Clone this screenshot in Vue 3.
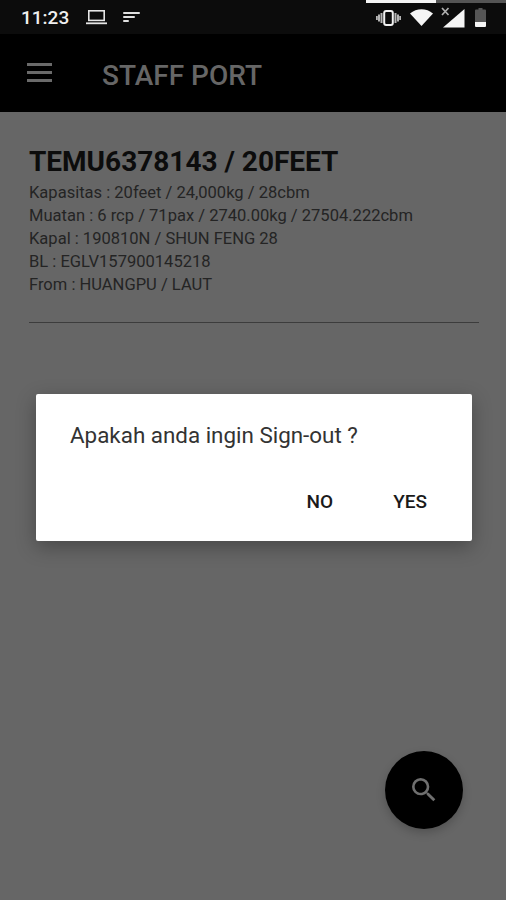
<template>
  <div class="screen">
    <div class="status-bar">
      <div class="status-strip"></div>
      <span class="clock">11:23</span>
      <svg class="ic-laptop" width="22" height="16" viewBox="0 0 22 16">
        <rect x="2.8" y="1.8" width="15.4" height="9.6" fill="none" stroke="#e6e6e6" stroke-width="1.6" />
        <rect x="0" y="13.4" width="21" height="1.8" fill="#e6e6e6" />
      </svg>
      <svg class="ic-notes" width="18" height="12" viewBox="0 0 18 12">
        <rect x="0" y="1" width="17" height="2" rx="1" fill="#e0e0e0" />
        <rect x="0" y="5" width="12" height="2" rx="1" fill="#e0e0e0" />
        <rect x="0" y="9" width="6" height="2" rx="1" fill="#e0e0e0" />
      </svg>
      <div class="status-right">
        <svg width="25" height="16" viewBox="0 0 25 16">
          <rect x="8.2" y="1" width="8.6" height="14" rx="2" fill="none" stroke="#f0f0f0" stroke-width="2" />
          <path d="M5.500 3v10M3 4.500v7M0.800 6v4M19.500 3v10M22 4.500v7M24.200 6v4" stroke="#b5b5b5" stroke-width="2" />
        </svg>
        <svg class="ic-wifi" width="23" height="17" viewBox="0 0 23 17">
          <path d="M0 4.500C6.500 -1.200 16.500 -1.200 23 4.500L11.500 17Z" fill="#f5f5f5" />
        </svg>
        <svg class="ic-signal" width="24" height="21" viewBox="0 0 24 21">
          <path d="M23.500 2V20.500H2Z" fill="#f5f5f5" />
          <path d="M1 1l6.500 7M7.500 1l-6.500 7" stroke="#b0b0b0" stroke-width="1.700" />
        </svg>
        <svg class="ic-battery" width="11" height="19" viewBox="0 0 11 19">
          <path d="M3.500 0h4v1.500h2.500a1 1 0 0 1 1 1V14H0V2.500a1 1 0 0 1 1-1h2.500Z" fill="#565656" />
          <path d="M0 14h11v4a1 1 0 0 1-1 1H1a1 1 0 0 1-1-1Z" fill="#f5f5f5" />
        </svg>
      </div>
    </div>

    <header class="app-bar">
      <svg class="menu" width="28" height="20" viewBox="0 0 28 20">
        <rect x="1" y="1" width="25" height="3" fill="#6a6a6a" />
        <rect x="1" y="9" width="25" height="3" fill="#6a6a6a" />
        <rect x="1" y="17" width="25" height="3" fill="#6a6a6a" />
      </svg>
      <span class="title">STAFF PORT</span>
    </header>

    <main class="content">
      <h1>{{ heading }}</h1>
      <p v-for="line in lines" :key="line">{{ line }}</p>
      <hr />
    </main>

    <div class="dialog">
      <div class="message">Apakah anda ingin Sign-out ?</div>
      <div class="actions">
        <span>NO</span>
        <span>YES</span>
      </div>
    </div>

    <div class="fab">
      <svg width="32" height="32" viewBox="0 0 24 24">
        <path fill="#6f6f6f" d="M15.500 14h-.79l-.28-.27A6.471 6.471 0 0 0 16 9.500 6.500 6.500 0 1 0 9.500 16c1.610 0 3.090-.59 4.230-1.570l.27.28v.79l5 4.990L20.490 19l-4.990-5zm-6 0C7.010 14 5 11.990 5 9.500S7.010 5 9.500 5 14 7.010 14 9.500 11.990 14 9.500 14z" />
      </svg>
    </div>
  </div>
</template>

<script setup>
const heading = 'TEMU6378143 / 20FEET'
const lines = [
  'Kapasitas : 20feet / 24,000kg / 28cbm',
  'Muatan : 6 rcp / 71pax / 2740.00kg / 27504.222cbm',
  'Kapal : 190810N / SHUN FENG 28',
  'BL : EGLV157900145218',
  'From : HUANGPU / LAUT'
]
</script>

<style>
html,
body {
  margin: 0;
  background: #666;
}
</style>

<style scoped>
.screen {
  position: relative;
  width: 506px;
  height: 900px;
  overflow: hidden;
  background: #666666;
  font-family: Roboto, "Liberation Sans", sans-serif;
}

.status-bar {
  position: relative;
  display: flex;
  align-items: center;
  height: 34px;
  padding: 0 20px 0 21px;
  box-sizing: border-box;
  background: #0c0c0c;
}

.status-strip {
  position: absolute;
  top: 0;
  left: 366px;
  width: 140px;
  height: 3px;
  background: linear-gradient(to right, #f5f5f5 0 50%, #555 50% 100%);
}

.clock {
  color: #f0f0f0;
  font-size: 19px;
  font-weight: 500;
  margin-right: 17px;
}

.ic-notes {
  margin-left: 15px;
}

.status-right {
  display: flex;
  align-items: center;
  margin-left: auto;
  gap: 8px;
  padding-top: 1px;
}

.ic-wifi {
  margin-left: 1px;
}

.ic-signal {
  margin-left: 0;
  margin-top: -1px;
}

.ic-battery {
  margin-left: 2px;
}

.app-bar {
  display: flex;
  align-items: center;
  height: 78px;
  padding-left: 26px;
  box-sizing: border-box;
  background: #000;
}

.menu {
  margin-right: 48px;
  margin-top: -2px;
}

.title {
  color: #666;
  font-size: 28px;
  font-weight: 500;
  padding-top: 4px;
}

.content {
  padding: 34px 27px 0 29px;
}

h1 {
  margin: 0 0 3px;
  color: #0c0c0c;
  font-size: 28px;
  line-height: 32px;
  font-weight: 700;
}

p {
  margin: 0;
  color: #242424;
  font-size: 16.550px;
  line-height: 23px;
}

hr {
  margin: 26px 0 0;
  border: 0;
  height: 1px;
  background: #3c3c3c;
}

.dialog {
  position: absolute;
  left: 36px;
  top: 394px;
  width: 436px;
  height: 147px;
  box-sizing: border-box;
  display: flex;
  flex-direction: column;
  justify-content: space-between;
  padding: 28px 45px 27px 34px;
  background: #fff;
  border-radius: 2px;
  box-shadow: 0 6px 20px rgba(0, 0, 0, 0.3);
}

.message {
  color: #333;
  font-size: 22.400px;
  line-height: 26px;
}

.actions {
  display: flex;
  justify-content: flex-end;
  gap: 60px;
  color: #1a1a1a;
  font-size: 19px;
  font-weight: 500;
  line-height: 24px;
}

.fab {
  position: absolute;
  left: 385px;
  top: 751px;
  width: 78px;
  height: 78px;
  display: flex;
  align-items: center;
  justify-content: center;
  border-radius: 50%;
  background: #000;
  box-shadow: 0 4px 10px rgba(0, 0, 0, 0.2);
}
</style>
